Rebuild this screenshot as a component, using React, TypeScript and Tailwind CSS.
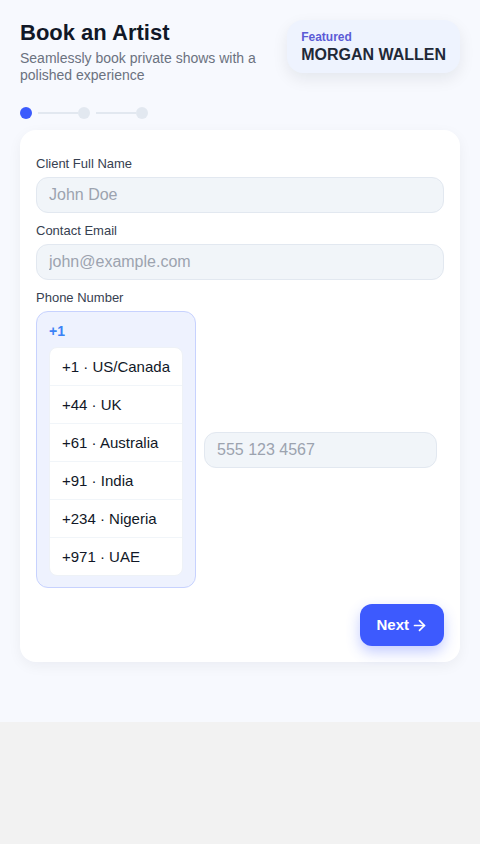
import { ArrowRight } from 'lucide-react'

const codes = [
  '+1 · US/Canada',
  '+44 · UK',
  '+61 · Australia',
  '+91 · India',
  '+234 · Nigeria',
  '+971 · UAE',
]

function Field({ label, placeholder }: { label: string; placeholder: string }) {
  return (
    <div className="mb-[9px]">
      <label className="mb-[5px] block text-[13px] leading-[17px] text-[#374151]">{label}</label>
      <input
        className="h-9 w-full rounded-xl border border-[#e2e8f0] bg-[#f1f5f9] px-3 text-base text-[#111827] outline-none placeholder:text-[#9ca3af]"
        placeholder={placeholder}
      />
    </div>
  )
}

export default function App() {
  return (
    <div className="min-h-[844px] bg-[#f2f2f2] font-['Liberation_Sans',Arial,sans-serif]">
      <div className="h-[722px] bg-[#f7f9fe] px-5 pt-5">
        {/* Header */}
        <div className="flex items-start justify-between gap-4">
          <div className="flex-1">
            <h1 className="text-[22px] font-bold leading-[26px] text-[#111827]">Book an Artist</h1>
            <p className="mt-[4px] text-[14px] leading-[17px] text-[#6b7280]">
              Seamlessly book private shows with a polished experience
            </p>
          </div>
          <div className="rounded-2xl bg-[#eef3fe] px-[14px] pb-[9px] pt-[10px] shadow-[0_6px_16px_rgba(15,23,42,0.08)]">
            <div className="text-[12px] font-bold leading-[15px] text-[#5b5bd6]">Featured</div>
            <div className="text-[16px] font-bold leading-[19px] text-[#1f2937]">MORGAN WALLEN</div>
          </div>
        </div>

        {/* Stepper */}
        <div className="mt-[23px] flex items-center">
          <span className="h-3 w-3 rounded-full bg-[#3b5bfd]" />
          <span className="ml-[6px] h-[2px] w-10 bg-[#e2e8f0]" />
          <span className="h-3 w-3 rounded-full bg-[#e2e8f0]" />
          <span className="ml-[6px] h-[2px] w-10 bg-[#e2e8f0]" />
          <span className="h-3 w-3 rounded-full bg-[#e2e8f0]" />
        </div>

        {/* Form card */}
        <div className="mt-[11px] rounded-2xl bg-white px-4 pb-4 pt-[25px] shadow-[0_4px_14px_rgba(15,23,42,0.05)]">
          <Field label="Client Full Name" placeholder="John Doe" />
          <Field label="Contact Email" placeholder="john@example.com" />

          <label className="mb-[5px] block text-[13px] leading-[17px] text-[#374151]">Phone Number</label>
          <div className="flex items-center gap-2">
            <div className="w-40 rounded-xl border border-[#c7d2fe] bg-[#eef2fe] px-3 pb-[11px] pt-[9px]">
              <div className="text-[14px] font-bold leading-[20px] text-[#3b82f6]">+1</div>
              <ul className="mt-[6px] overflow-hidden rounded-lg border border-[#eef2f7] bg-white">
                {codes.map((c, i) => (
                  <li
                    key={c}
                    className={`px-3 text-[15px] leading-[37px] text-[#111827] ${i > 0 ? 'border-t border-[#f1f5f9]' : ''}`}
                  >
                    {c}
                  </li>
                ))}
              </ul>
            </div>
            <input
              className="h-9 w-[233px] rounded-xl border border-[#e2e8f0] bg-[#f1f5f9] px-3 text-base outline-none placeholder:text-[#9ca3af]"
              placeholder="555 123 4567"
            />
          </div>

          <div className="mt-4 flex justify-end">
            <button className="flex h-[42px] items-center gap-[2px] rounded-xl bg-[#3d5afe] px-4 text-[15px] font-bold text-white shadow-[0_6px_14px_rgba(61,90,254,0.3)]">
              Next
              <ArrowRight size={17} strokeWidth={2.4} />
            </button>
          </div>
        </div>
      </div>
    </div>
  )
}
